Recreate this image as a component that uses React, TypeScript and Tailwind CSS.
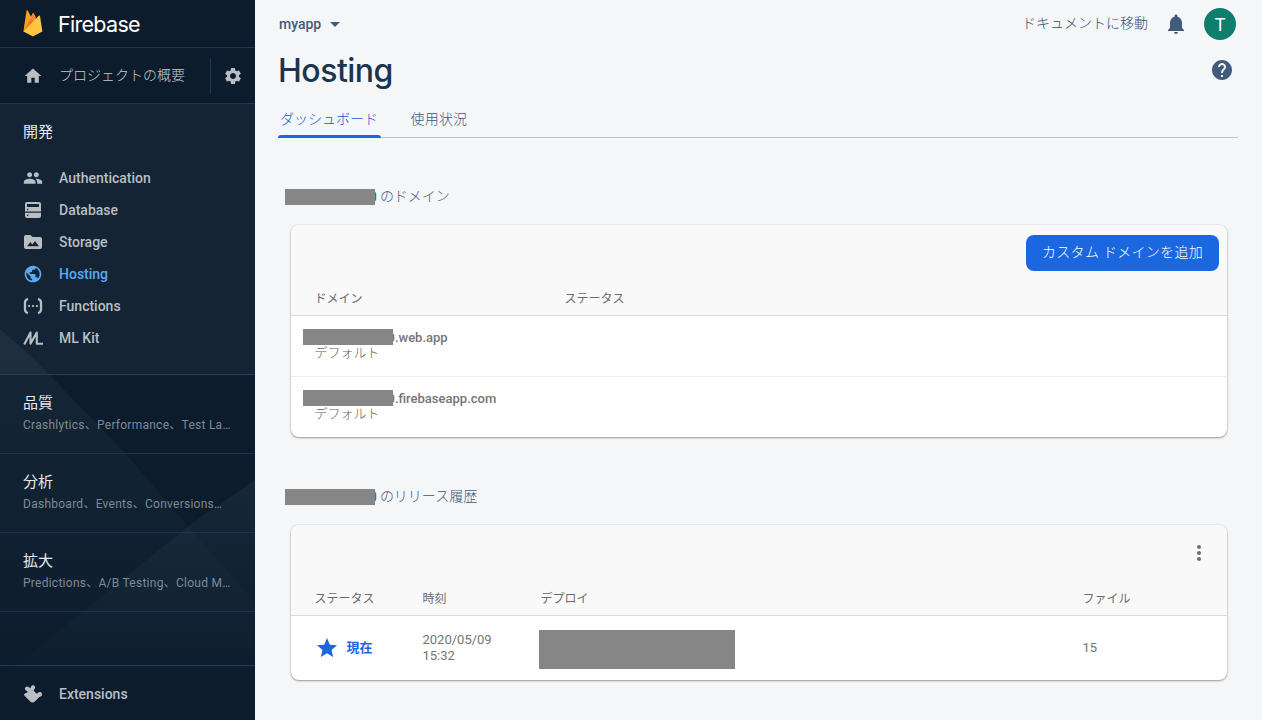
import React from "react";
import {
  MdHome, MdSettings, MdPeople, MdPublic, MdNotifications, MdHelp, MdMoreVert, MdStar, MdArrowDropDown,
} from "react-icons/md";

const icon = "size-5 shrink-0";

function FirebaseLogo() {
  return (
    <svg className="h-[27px] w-5 shrink-0" viewBox="0 0 20 27">
      <path d="M.4 21.400 8.300 6l1.300-2.700c.3-.5.900-.5 1.200 0l2 4L13 12z" fill="#f6892b" />
      <path d="M.4 21.400 3.500.800c.1-.6.900-.7 1.200-.2L8.300 7.200l2.200 4.200z" fill="#fb9f2b" />
      <path d="M.4 21.400 8.200 7.800l2.300 3.800z" fill="#ee7622" />
      <path d="M.4 21.400 16 5.600c.3-.4.900-.2 1 .3l2.400 15.500-8.800 4.700c-.5.300-1.100.3-1.600 0z" fill="#ffc640" />
    </svg>
  );
}

function DatabaseIcon() {
  return (
    <svg className={icon} viewBox="0 0 20 20" fill="currentColor" fillRule="evenodd">
      <path d="M4 2h12a2 2 0 0 1 2 2v7.400H2V4a2 2 0 0 1 2-2zM4 4v3h12V4zM2 12.800h16V16a2 2 0 0 1-2 2H4a2 2 0 0 1-2-2zM4 8.700V10h1.300V8.700zM4 14.700V16h1.300v-1.300z" />
    </svg>
  );
}

function StorageIcon() {
  return (
    <svg className={icon} viewBox="0 0 20 20" fill="currentColor" fillRule="evenodd">
      <path d="M3 3h4.500l2 2H17a2 2 0 0 1 2 2v8a2 2 0 0 1-2 2H3a2 2 0 0 1-2-2V5a2 2 0 0 1 2-2zM4 14.200h12l-4-5.200-2.700 3.500L7.500 10z" />
    </svg>
  );
}

function FunctionsIcon() {
  return (
    <svg className={icon} viewBox="0 0 20 20">
      <path d="M4.900 2.700C3 3.600 2 4.400 2 6.200v7.600c0 1.800 1 2.600 2.900 3.500M15.100 2.700c1.900.9 2.900 1.700 2.900 3.500v7.600c0 1.800-1 2.600-2.900 3.500" fill="none" stroke="currentColor" strokeWidth="2.300" />
      <path d="M5.200 9.100H7v1.800H5.200zM9.100 9.100h1.800v1.800H9.100zM13 9.100h1.800v1.800H13z" fill="currentColor" />
    </svg>
  );
}

function MlKitIcon() {
  return (
    <svg className={icon} viewBox="0 0 20 20" fill="none" stroke="currentColor" strokeWidth="2.100" strokeLinejoin="round">
      <path d="M1.200 16.600 7.500 4.500v11.300L13.800 4.500v11.200H20" />
    </svg>
  );
}

function ExtensionsIcon() {
  return (
    <svg className={icon} viewBox="0 0 20 20" fill="currentColor">
      <path d="M2.500 3.200c1.300-1.200 2.900-.6 3.700.300l1 .4c.5 0 .5-.4.700-1 .5-2 3.200-2.200 4-.5.500 1.300-.1 2.300-.8 3-.6.700-.5 1.100-.1 1.500l2.400 2.500c.4.300.9.200 1.400-.4.900-1.200 2.400-1.400 3.400-.6 1.300 1.100 1.100 3.200-.5 4.100-1 .500-1.400.5-2.100 1.200l-3.700 3.700c-1.300 1.300-3.300 1.300-4.600 0L1.600 11.700c-.7-.7-.7-1.300-.1-2 .9-.9 2.400-.7 2.900-1.500.4-.7-.4-1-1.100-1.400-1.400-.8-1.900-2.400-.8-3.600z" />
    </svg>
  );
}

const products = [
  { name: "Authentication", glyph: <MdPeople className={icon} /> },
  { name: "Database", glyph: <DatabaseIcon /> },
  { name: "Storage", glyph: <StorageIcon /> },
  { name: "Hosting", glyph: <MdPublic className={icon} />, active: true },
  { name: "Functions", glyph: <FunctionsIcon /> },
  { name: "ML Kit", glyph: <MlKitIcon /> },
];

const groups = [
  { title: "品質", items: "Crashlytics、Performance、Test La…" },
  { title: "分析", items: "Dashboard、Events、Conversions…" },
  { title: "拡大", items: "Predictions、A/B Testing、Cloud M…" },
];

function Sidebar() {
  return (
    <aside className="relative flex h-[720px] w-[255px] shrink-0 flex-col overflow-hidden bg-[#0c1c2d] text-[#b9bec3]">
      <svg className="absolute inset-0" width="255" height="720" viewBox="0 0 255 720">
        <defs>
          <linearGradient id="left" gradientUnits="userSpaceOnUse" x1="0" y1="330" x2="0" y2="680">
            <stop offset="0" stopColor="#8fb0b8" stopOpacity=".07" />
            <stop offset="1" stopColor="#8fb0b8" stopOpacity="0" />
          </linearGradient>
          <linearGradient id="right" gradientUnits="userSpaceOnUse" x1="0" y1="480" x2="0" y2="690">
            <stop offset="0" stopColor="#8fb0b8" stopOpacity=".075" />
            <stop offset="1" stopColor="#8fb0b8" stopOpacity="0" />
          </linearGradient>
        </defs>
        <path d="M0 329 36 361 125 453 187 525 255 603V720H0z" fill="url(#left)" />
        <path d="M255 480 190 525 84 611 0 679V720H255z" fill="url(#right)" />
      </svg>
      <div className="relative flex h-12 shrink-0 items-center border-b border-[#1f3a56] pl-[23px]">
        <FirebaseLogo />
        <span className="mt-[2px] ml-[15px] font-[Inter] text-[21.500px] tracking-[-0.7px] text-white">Firebase</span>
      </div>
      <div className="relative flex h-14 shrink-0 items-center border-b border-[#1f3a56] pl-[23px]">
        <MdHome className={icon} />
        <span className="ml-4 w-[151px] text-[14px] font-light text-[#c6cacf]">プロジェクトの概要</span>
        <div className="h-9 w-px bg-[#1f3a56]" />
        <MdSettings className="ml-3 size-5" />
      </div>
      <div className="relative h-[271px] shrink-0 border-b border-[#1f4260] bg-white/[0.04]">
        <h2 className="flex h-14 items-center pl-[23px] text-[15px] text-[#e8eaed]">開発</h2>
        <nav className="mt-[2px] flex flex-col">
          {products.map((p) => (
            <a key={p.name} className={"flex h-8 items-center gap-4 pl-[23px] text-[14px] font-medium " + (p.active ? "text-[#5aabf5]" : "")}>
              {p.glyph}
              <span>{p.name}</span>
            </a>
          ))}
        </nav>
      </div>
      {groups.map((g) => (
        <section key={g.title} className="relative h-[79px] shrink-0 border-b border-[#1a3550] pt-[17px] pl-[23px]">
          <h2 className="text-[15px] leading-[22px] text-[#e8eaed]">{g.title}</h2>
          <p className="text-[12px] leading-[22px] tracking-[0.26px] whitespace-nowrap text-[#7f8a94]">{g.items}</p>
        </section>
      ))}
      <div className="relative grow" />
      <div className="relative flex h-[55px] shrink-0 items-center gap-4 border-t border-[#1f3a56] pt-[2px] pl-[23px] text-[14px] font-medium">
        <ExtensionsIcon />
        <span>Extensions</span>
      </div>
    </aside>
  );
}

function MaskedText({ children, className }: { children: React.ReactNode; className: string }) {
  return (
    <div className={"flex h-4 items-center whitespace-nowrap " + className}>
      <span className="relative z-10 h-4 w-[90px] shrink-0 bg-[#868686]" />
      {children}
    </div>
  );
}

function SectionTitle({ children }: { children: React.ReactNode }) {
  return (
    <MaskedText className="text-[14px] text-[#3d587a]">
      <span className="-ml-[6px]">0</span>
      <span className="mb-[2px] ml-[3px] font-light">{children}</span>
    </MaskedText>
  );
}

const cardClass = "ml-[6px] w-[936px] overflow-hidden rounded-lg bg-white shadow-[0_1px_2px_rgba(0,0,0,0.35),0_0_2px_rgba(0,0,0,0.18)]";

function DomainRow({ suffix }: { suffix: string }) {
  return (
    <div className="h-[60px] pt-[13px] text-[13px] text-[#757575]">
      <MaskedText className="ml-3 font-medium">
        <span className="mt-px -ml-[5.500px]">0{suffix}</span>
      </MaskedText>
      <div className="ml-[23.500px] h-4 leading-4 font-light text-[#5f5f5f]">デフォルト</div>
    </div>
  );
}

export default function App() {
  return (
    <div className="flex h-[720px] w-[1262px] overflow-hidden bg-[#f4f6f8] font-[Roboto,'Noto_Sans_CJK_JP',sans-serif]">
      <Sidebar />
      <main className="flex w-[1007px] flex-col pl-[23px]">
        <header className="flex h-12 w-[958px] shrink-0 items-center text-[14px] text-[#425b7b]">
          <span className="ml-px font-medium">myapp</span>
          <MdArrowDropDown className="ml-[2px] size-6" />
          <span className="mb-px ml-auto font-light text-[#344f72]">ドキュメントに移動</span>
          <MdNotifications className="mx-4 size-6" />
          <span className="flex size-8 items-center justify-center rounded-full bg-[#0f7e6d] text-[18px] text-white">T</span>
        </header>
        <div className="flex h-11 w-[956px] shrink-0 items-center justify-between">
          <h1 className="mt-[2px] font-[Inter] text-[32px] leading-10 font-[450] tracking-[-0.5px] text-[#1b344f]">Hosting</h1>
          <MdHelp className="size-6 text-[#425b7b]" />
        </div>
        <div className="flex h-[46px] w-[960px] shrink-0 items-end border-b border-[#b7c6d3] text-[14px] font-light text-[#3d587a]">
          <div className="-mb-px flex h-9 w-[103px] flex-col justify-between text-[#0f5ad8]">
            <span className="mt-[7px] ml-[2px] leading-5 whitespace-nowrap">ダッシュボード</span>
            <div className="h-[3px] rounded-t-sm bg-[#1a66e0]" />
          </div>
          <span className="mb-2 ml-[29.500px] leading-5 tracking-[0.2px]">使用状況</span>
        </div>

        <section className="ml-[7px] pt-[51px]">
          <SectionTitle>のドメイン</SectionTitle>
          <div className={cardClass + " mt-5"}>
            <div className="flex h-[91px] flex-col border-b border-[#dadada] bg-[#f9f9f9]">
              <button className="mt-[10px] mr-2 flex h-9 w-[193px] items-center justify-center self-end rounded-lg bg-[#1a67e0] pb-px text-[14px] font-light tracking-[0.3px] whitespace-nowrap text-white">
                カスタム ドメインを追加
              </button>
              <div className="grid grid-cols-[250px_1fr] pt-[19px] pl-[23.500px] text-[12px] leading-[18px] text-[#6b6b6b]">
                <span>ドメイン</span>
                <span>ステータス</span>
              </div>
            </div>
            <DomainRow suffix=".web.app" />
            <div className="h-px bg-[#ececec]" />
            <DomainRow suffix=".firebaseapp.com" />
          </div>
        </section>

        <section className="ml-[7px] pt-[52px]">
          <SectionTitle>のリリース履歴</SectionTitle>
          <div className={cardClass + " mt-5"}>
            <div className="flex h-[91px] flex-col border-b border-[#dadada] bg-[#f9f9f9]">
              <MdMoreVert className="mt-4 mr-[16.500px] size-6 self-end text-[#6f6f6f]" />
              <div className="grid grid-cols-[108px_118px_542px_1fr] pt-[25px] pl-[23.500px] text-[12px] leading-[18px] text-[#6b6b6b]">
                <span>ステータス</span>
                <span>時刻</span>
                <span>デプロイ</span>
                <span>ファイル</span>
              </div>
            </div>
            <div className="grid h-[64px] grid-cols-[107.500px_117px_543px_1fr] items-center pl-[23.500px] text-[13px] text-[#757575]">
              <span className="flex items-center gap-2 font-bold text-[#1a67e0]">
                <MdStar className="size-6" />
                現在
              </span>
              <span className="ml-[0.500px] leading-4">2020/05/09<br />15:32</span>
              <div className="mt-[3px] h-[39px] w-[196px] bg-[#868686]" />
              <span className="ml-[0.500px]">15</span>
            </div>
          </div>
        </section>
      </main>
    </div>
  );
}
